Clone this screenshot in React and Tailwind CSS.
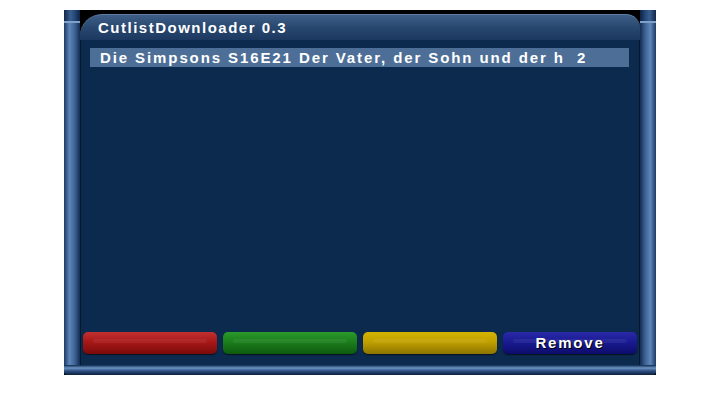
import React from "react";

const font = { fontFamily: '"Liberation Sans", Arial, sans-serif' };

function Btn({ from, mid, to, children }) {
  return (
    <div
      className="relative h-[22px] flex-1 rounded-[5px] flex items-center justify-center overflow-hidden shadow-[0_1px_1px_rgba(0,0,0,0.6)]"
      style={{ background: `linear-gradient(to bottom, ${from} 0%, ${mid} 45%, ${to} 100%)` }}
    >
      <div className="absolute left-[10px] right-[10px] top-[7px] h-[4px] rounded-full bg-white/[0.06]" />
      {children}
    </div>
  );
}

export default function App() {
  return (
    <div className="w-[720px] h-[405px] bg-white" style={font}>
      <div className="pt-[10px] pl-[64px]">
        <div className="w-[592px] h-[365px] flex flex-col bg-black">
          <div className="flex flex-1 min-h-0">
            {/* left pillar */}
            <div className="w-[16px] flex flex-col bg-[linear-gradient(to_right,#1d3a66,#5f86b8_35%,#3a5e90_70%,#142c52)]">
              <div className="h-[11px] bg-[linear-gradient(to_right,#10274a,#3a5e8e_40%,#234474,#0e2242)]" />
              <div className="h-[2px] bg-[#7fa0c8]" />
              <div className="flex-1" />
            </div>
            {/* center */}
            <div className="flex-1 flex flex-col bg-black pt-[4px]">
              <div className="h-[26px] rounded-tl-[22px] rounded-tr-[14px] bg-[linear-gradient(to_bottom,#3e5e88,#29486f_50%,#1c3860)] flex items-center pl-[18px] border-t border-[#5c7ca4]">
                <span className="text-white font-bold text-[15px] tracking-[1.5px] leading-none">CutlistDownloader 0.3</span>
              </div>
              <div className="flex-1 bg-[#0b2a4d] flex flex-col border-l border-[#06182e] border-r">
                <div className="mt-[8px] ml-[9px] mr-[10px] h-[19px] bg-[#4d6f97] flex items-center pl-[10px] overflow-hidden">
                  <span className="text-white font-bold text-[15px] tracking-[1.9px] leading-none whitespace-pre">
                    Die Simpsons S16E21 Der Vater, der Sohn und der h  2
                  </span>
                </div>
                <div className="flex-1" />
                <div className="flex gap-[6px] pl-[2px] pr-[2px] mb-[11px]">
                  <Btn from="#c23030" mid="#a81818" to="#7a0a0a" />
                  <Btn from="#2a9a2a" mid="#1c7e1c" to="#0e5a0e" />
                  <Btn from="#d4b400" mid="#c0a000" to="#8c7400" />
                  <Btn from="#2a2aa8" mid="#1a1a92" to="#0c0c6a">
                    <span
                      className="relative text-white font-bold text-[15px] tracking-[1.8px]"
                      style={{ textShadow: "1px 1px 0 #000" }}
                    >
                      Remove
                    </span>
                  </Btn>
                </div>
              </div>
            </div>
            {/* right pillar */}
            <div className="w-[16px] flex flex-col bg-[linear-gradient(to_right,#142c52,#3a5e90_30%,#5f86b8_65%,#1d3a66)]">
              <div className="h-[11px] bg-[linear-gradient(to_right,#0e2242,#234474,#3a5e8e_60%,#10274a)]" />
              <div className="h-[2px] bg-[#7fa0c8]" />
              <div className="flex-1" />
            </div>
          </div>
          {/* bottom frame */}
          <div className="h-[10px] bg-[linear-gradient(to_bottom,#0b2a4d,#6d93c4_30%,#2c4e80_60%,#0c1e3c)] rounded-b-[3px]" />
        </div>
      </div>
    </div>
  );
}
